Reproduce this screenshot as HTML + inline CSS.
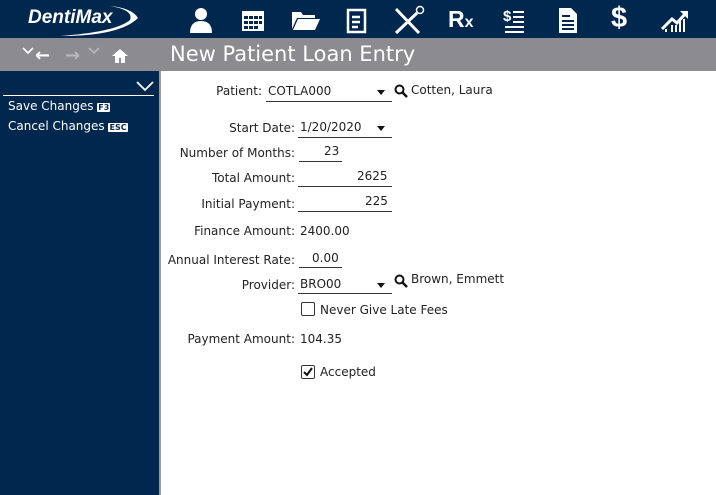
<!DOCTYPE html>
<html><head><style>
*{margin:0;padding:0;box-sizing:border-box}
body{width:716px;height:495px;overflow:hidden;background:#fff;font-family:"DejaVu Sans","Liberation Sans",sans-serif;font-size:12px;color:#222;position:relative}
.a{position:absolute}
.top{left:0;top:0;width:716px;height:38px;background:#00284f}
.gray{left:0;top:38px;width:716px;height:33px;background:#8b8b90}
.side{left:0;top:71px;width:159px;height:424px;background:#00284f}
.bord{left:159px;top:71px;width:2px;height:424px;background:#999}
.lbl{text-align:right;width:160px}
.ul{border-bottom:1px solid #333;height:1px}
.ic{color:#fff;font-weight:bold;font-family:"Liberation Sans",sans-serif}
.key{background:#fff;color:#00284f;font-size:8px;font-weight:bold;padding:0 1px;border-radius:1px}
.cb{width:14px;height:14px;border:1px solid #333;border-radius:2px}
.dd{width:8px;height:5px}
</style></head><body>
<div class="a top"></div>
<div class="a gray"></div>
<div class="a side"></div>
<div class="a bord"></div>
<div class="a" style="left:28px;top:7px;color:#fff;font-family:'Liberation Sans',sans-serif;font-style:italic;font-weight:bold;font-size:19px">DentiMax</div>
<svg class="a" style="left:50px;top:4px" width="95" height="34"><path d="M10 32 Q70 32 88 14 Q82 4 60 2 Q84 6 80 16 Q66 28 10 32Z" fill="#fff"/></svg>
<svg class="a" style="left:186px;top:6px" width="30" height="28" fill="#fff"><circle cx="15" cy="8" r="6"/><path d="M4 27 Q4 15 15 15 Q26 15 26 27Z"/></svg>
<svg class="a" style="left:240px;top:7px" width="26" height="26"><rect x="2" y="4" width="22" height="20" fill="#fff"/><g fill="#00284f"><rect x="4" y="9" width="4" height="3"/><rect x="9" y="9" width="4" height="3"/><rect x="14" y="9" width="4" height="3"/><rect x="19" y="9" width="3" height="3"/><rect x="4" y="14" width="4" height="3"/><rect x="9" y="14" width="4" height="3"/><rect x="14" y="14" width="4" height="3"/><rect x="19" y="14" width="3" height="3"/><rect x="4" y="19" width="4" height="3"/><rect x="9" y="19" width="4" height="3"/><rect x="14" y="19" width="4" height="3"/></g></svg>
<svg class="a" style="left:291px;top:9px" width="30" height="22" fill="#fff"><path d="M1 3h9l2 3h12v3H6L1 20Z"/><path d="M7 10h22l-5 11H2Z"/></svg>
<svg class="a" style="left:345px;top:6px" width="24" height="28" fill="none" stroke="#fff" stroke-width="2.5"><rect x="3" y="4" width="17" height="22"/><path d="M7 11h8M7 16h8M7 21h6"/></svg>
<svg class="a" style="left:393px;top:5px" width="32" height="30" stroke="#fff" stroke-width="3" fill="none"><path d="M3 4L26 28M3 28L24 8"/><circle cx="27" cy="5" r="3.5" stroke-width="1.5"/></svg>
<div class="a ic" style="left:448px;top:6px;font-size:23px">R<span style="font-size:16px">x</span></div>
<svg class="a" style="left:503px;top:7px" width="24" height="28" fill="#fff"><text x="0" y="14" font-size="15" font-weight="bold" font-family="Liberation Sans">$</text><rect x="10" y="4" width="11" height="2"/><rect x="10" y="9" width="11" height="2"/><rect x="10" y="14" width="11" height="2"/><rect x="2" y="19" width="19" height="2"/><rect x="2" y="24" width="19" height="2"/></svg>
<svg class="a" style="left:557px;top:6px" width="22" height="28"><path d="M2 2h12l6 6v19H2Z" fill="#fff"/><g fill="#00284f"><rect x="5" y="9" width="8" height="2"/><rect x="5" y="14" width="12" height="2"/><rect x="5" y="18" width="12" height="2"/><rect x="5" y="22" width="12" height="2"/></g></svg>
<div class="a ic" style="left:611px;top:2px;font-size:29px">$</div>
<svg class="a" style="left:660px;top:7px" width="30" height="26" fill="#fff"><path d="M2 22L12 12L17 16L25 7" stroke="#fff" stroke-width="3" fill="none"/><path d="M20 4h8v8Z"/><rect x="11" y="18" width="2" height="7"/><rect x="15" y="18" width="2" height="7"/><rect x="19" y="14" width="2" height="11"/><rect x="23" y="12" width="2" height="13"/><rect x="5" y="22" width="2" height="3"/></svg>
<svg class="a" style="left:22px;top:47px" width="12" height="8"><path d="M1 1L6 6L11 1" stroke="#fff" stroke-width="1.6" fill="none"/></svg>
<div class="a" style="left:35px;top:45px;color:#fff;font-size:18px;font-weight:bold">←</div>
<div class="a" style="left:65px;top:45px;color:#b8b8bc;font-size:18px;font-weight:bold">→</div>
<svg class="a" style="left:88px;top:47px" width="12" height="8"><path d="M1 1L6 6L11 1" stroke="#b8b8bc" stroke-width="1.6" fill="none"/></svg>
<svg class="a" style="left:112px;top:49px" width="16" height="14" fill="#fff"><path d="M8 0L16 7H13V14H9V9H7V14H3V7H0Z"/></svg>
<div class="a" style="left:170px;top:42px;color:#fff;font-size:21px">New Patient Loan Entry</div>
<svg class="a" style="left:136px;top:80px" width="18" height="12"><path d="M1 2L9 10L17 2" stroke="#fff" stroke-width="1.8" fill="none"/></svg>
<div class="a" style="left:3px;top:95px;width:151px;height:1px;background:#fff"></div>
<div class="a" style="left:8px;top:99px;color:#fff">Save Changes <span class="key">F3</span></div>
<div class="a" style="left:8px;top:119px;color:#fff">Cancel Changes <span class="key">ESC</span></div>

<div class="a lbl" style="left:102px;top:84px">Patient:</div>
<div class="a" style="left:268px;top:84px">COTLA000</div>
<div class="a ul" style="left:266px;top:101px;width:126px"></div>
<svg class="a dd" style="left:377px;top:90px"><path d="M0 0H8L4 5Z" fill="#111"/></svg>
<svg class="a" style="left:394px;top:84px" width="14" height="14"><circle cx="5.5" cy="5.5" r="4" stroke="#111" stroke-width="2" fill="none"/><path d="M8.5 8.5L13 13" stroke="#111" stroke-width="2.5"/></svg>
<div class="a" style="left:411px;top:83px">Cotten, Laura</div>

<div class="a lbl" style="left:135px;top:121px">Start Date:</div>
<div class="a" style="left:300px;top:120px">1/20/2020</div>
<svg class="a dd" style="left:377px;top:126px"><path d="M0 0H8L4 5Z" fill="#111"/></svg>
<div class="a ul" style="left:298px;top:137px;width:94px"></div>

<div class="a lbl" style="left:135px;top:146px">Number of Months:</div>
<div class="a" style="left:324px;top:144px">23</div>
<div class="a ul" style="left:299px;top:161px;width:43px"></div>

<div class="a lbl" style="left:135px;top:171px">Total Amount:</div>
<div class="a" style="left:357px;top:169px">2625</div>
<div class="a ul" style="left:298px;top:186px;width:94px"></div>

<div class="a lbl" style="left:135px;top:197px">Initial Payment:</div>
<div class="a" style="left:365px;top:194px">225</div>
<div class="a ul" style="left:298px;top:211px;width:94px"></div>

<div class="a lbl" style="left:135px;top:224px">Finance Amount:</div>
<div class="a" style="left:300px;top:224px">2400.00</div>

<div class="a lbl" style="left:135px;top:253px">Annual Interest Rate:</div>
<div class="a" style="left:312px;top:251px">0.00</div>
<div class="a ul" style="left:299px;top:267px;width:43px"></div>

<div class="a lbl" style="left:135px;top:278px">Provider:</div>
<div class="a" style="left:300px;top:277px">BRO00</div>
<svg class="a dd" style="left:377px;top:283px"><path d="M0 0H8L4 5Z" fill="#111"/></svg>
<div class="a ul" style="left:298px;top:293px;width:94px"></div>
<svg class="a" style="left:394px;top:274px" width="14" height="14"><circle cx="5.5" cy="5.5" r="4" stroke="#111" stroke-width="2" fill="none"/><path d="M8.5 8.5L13 13" stroke="#111" stroke-width="2.5"/></svg>
<div class="a" style="left:411px;top:272px">Brown, Emmett</div>

<div class="a cb" style="left:301px;top:302px"></div>
<div class="a" style="left:320px;top:303px">Never Give Late Fees</div>

<div class="a lbl" style="left:135px;top:332px">Payment Amount:</div>
<div class="a" style="left:300px;top:332px">104.35</div>

<div class="a cb" style="left:301px;top:365px"></div>
<svg class="a" style="left:302px;top:366px" width="12" height="12"><path d="M2 6L5 9L10 2" stroke="#111" stroke-width="2" fill="none"/></svg>
<div class="a" style="left:320px;top:365px">Accepted</div>
</body></html>
